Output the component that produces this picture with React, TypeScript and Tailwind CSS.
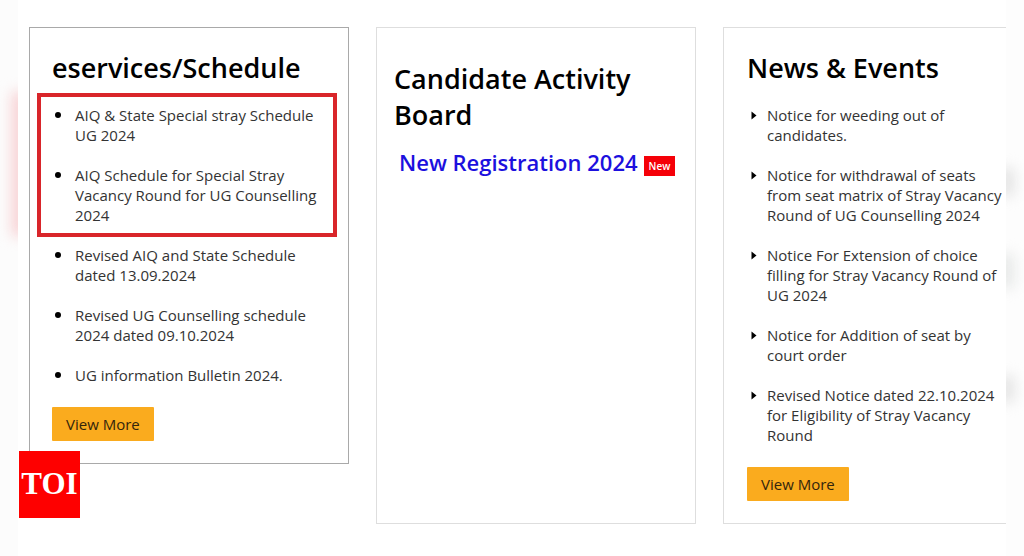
import React from "react";
import { clsx } from "clsx";

const schedules = [
  "AIQ & State Special stray Schedule UG 2024",
  "AIQ Schedule for Special Stray Vacancy Round for UG Counselling 2024",
  "Revised AIQ and State Schedule dated 13.09.2024",
  "Revised UG Counselling schedule 2024 dated 09.10.2024",
  "UG information Bulletin 2024.",
];

const news = [
  "Notice for weeding out of candidates.",
  "Notice for withdrawal of seats from seat matrix of Stray Vacancy Round of UG Counselling 2024",
  "Notice For Extension of choice filling for Stray Vacancy Round of UG 2024",
  "Notice for Addition of seat by court order",
  "Revised Notice dated 22.10.2024 for Eligibility of Stray Vacancy Round",
];

const Card = ({ className, children }: { className?: string; children: React.ReactNode }) => (
  <section className={clsx("w-80 shrink-0 border pr-[22px] pb-[22px]", className)}>{children}</section>
);

const Title = ({ children }: { children: React.ReactNode }) => (
  <h2 className="text-[27px] leading-9 font-semibold whitespace-nowrap text-black">{children}</h2>
);

const Dot = () => <span className="ml-[3px] mt-[7px] size-[6px] shrink-0 rounded-full bg-black" />;

const Caret = () => (
  <svg className="ml-1 mt-[6px] h-[9px] w-[6px] shrink-0" viewBox="0 0 6 9">
    <path d="M0.5 0.5 5.5 4.5 0.5 8.5Z" fill="#000" />
  </svg>
);

const ViewMore = () => (
  <button type="button" className="mt-[22px] h-[34px] rounded-[1px] bg-[#faab1e] px-[14px] text-[15px] text-[#33250c]">
    View More
  </button>
);

const App = () => {
  return (
    <div className="flex min-h-screen overflow-hidden bg-[#fefefe] font-['Open_Sans',sans-serif] text-[#333]">
      {/* Left edge glow */}
      <div className="w-[18px] shrink-0 overflow-hidden bg-[#fcfcfc] pt-[92px]">
        <div className="ml-3 h-[144px] w-4 bg-[#f8d0d2] blur-[7px]" />
      </div>

      <main className="relative min-w-0 flex-1 overflow-hidden bg-white pt-[27px] pb-[30px] pl-[11px]">
        <div className="flex gap-[27px]">
          <Card className="self-start border-[#a9a9a9] pt-[22px] pl-[22px]">
            <Title>eservices/Schedule</Title>
            <div className="relative mt-[19px]">
              <ul className="flex flex-col gap-5 text-[15px] leading-5">
                {schedules.map((item) => (
                  <li key={item} className="flex">
                    <Dot />
                    <span className="ml-[14px]">{item}</span>
                  </li>
                ))}
              </ul>
              {/* Highlight around the first two entries */}
              <div className="absolute -top-3 -left-[15px] h-[144px] w-[300px] border-4 border-[#d9252a]" />
            </div>
            <ViewMore />
          </Card>

          <Card className="border-[#dedede] pt-[33px] pl-[17px]">
            <Title>
              Candidate Activity
              <br />
              Board
            </Title>
            <div className="mt-[13px] flex items-center pl-[5px]">
              <a href="#registration" className="text-[22px] leading-8 font-semibold whitespace-nowrap text-[#1c10de]">
                New Registration 2024
              </a>
              <span className="mt-2 ml-[6px] bg-[#f50008] px-[5px] text-[10px] leading-5 font-semibold text-white">New</span>
            </div>
          </Card>

          <Card className="border-[#dedede] pt-[22px] pl-[23px]">
            <Title>News &amp; Events</Title>
            <ul className="mt-[19px] flex flex-col gap-5 text-[15px] leading-5">
              {news.map((item) => (
                <li key={item} className="flex">
                  <Caret />
                  <span className="mr-4 ml-[10px]">{item}</span>
                </li>
              ))}
            </ul>
            <ViewMore />
          </Card>
        </div>

        <div className="absolute top-[451px] left-px flex h-[67px] w-[61px] items-center justify-center bg-[#fe0000] font-['Liberation_Serif',serif] text-[31px] font-bold text-white">
          TOI
        </div>
      </main>

      {/* Right edge glow */}
      <div className="flex w-[18px] shrink-0 flex-col overflow-hidden bg-[#fdfdfd] pt-[168px]">
        <div className="-ml-2 h-[28px] w-4 shrink-0 bg-[#e2e2e2] blur-[7px]" />
        <div className="mt-[58px] -ml-2 h-[34px] w-4 shrink-0 bg-[#e6e8e7] blur-[7px]" />
        <div className="mt-[88px] -ml-2 h-[26px] w-4 shrink-0 bg-[#e2e2e2] blur-[7px]" />
      </div>
    </div>
  );
};

export default App;
